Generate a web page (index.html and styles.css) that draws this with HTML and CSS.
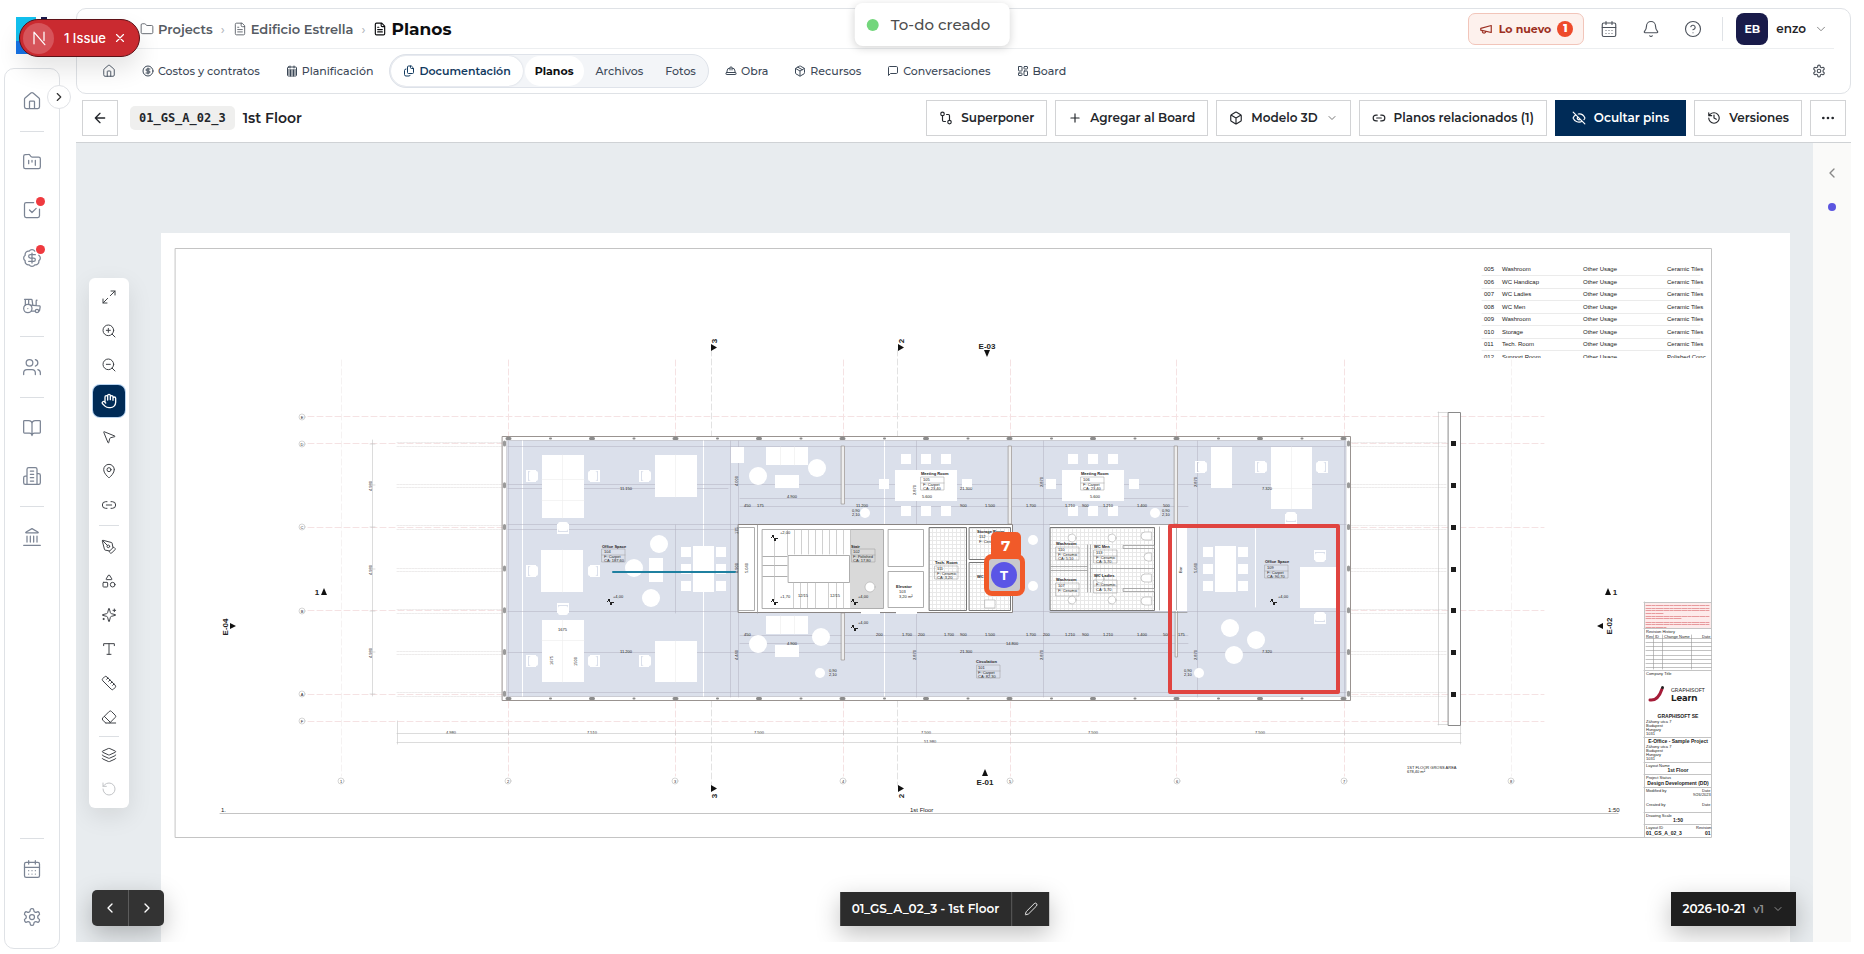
FILE: index.html
```html
<!DOCTYPE html>
<html lang="es">
<head>
<meta charset="utf-8">
<meta name="viewport" content="width=device-width, initial-scale=1">
<title>01_GS_A_02_3 - 1st Floor</title>
<link rel="stylesheet" href="styles.css">
</head>
<body>
<svg class="sprite" aria-hidden="true">
  <symbol id="home" viewBox="0 0 24 24"><path d="M15 21v-8a1 1 0 0 0-1-1h-4a1 1 0 0 0-1 1v8M3 10a2 2 0 0 1 .7-1.5l7-6a2 2 0 0 1 2.6 0l7 6A2 2 0 0 1 21 10v9a2 2 0 0 1-2 2H5a2 2 0 0 1-2-2z"/></symbol>
  <symbol id="kanban" viewBox="0 0 24 24"><path d="M4 20h16a2 2 0 0 0 2-2V8a2 2 0 0 0-2-2h-7.9a2 2 0 0 1-1.7-.9l-.8-1.2A2 2 0 0 0 7.9 3H4a2 2 0 0 0-2 2v13c0 1.1.9 2 2 2zM8 10v4M12 10v2M16 10v6"/></symbol>
  <symbol id="folder" viewBox="0 0 24 24"><path d="M20 20a2 2 0 0 0 2-2V8a2 2 0 0 0-2-2h-7.9a2 2 0 0 1-1.7-.9L9.600 3.900A2 2 0 0 0 7.900 3H4a2 2 0 0 0-2 2v13a2 2 0 0 0 2 2z"/></symbol>
  <symbol id="check" viewBox="0 0 24 24"><path d="M14 3H5a2 2 0 0 0-2 2v14a2 2 0 0 0 2 2h14a2 2 0 0 0 2-2v-8M9 12l3 3 5-5"/></symbol>
  <symbol id="money" viewBox="0 0 24 24"><path d="M3.850 8.620a4 4 0 0 1 4.780-4.770 4 4 0 0 1 6.740 0 4 4 0 0 1 4.780 4.780 4 4 0 0 1 0 6.740 4 4 0 0 1-4.770 4.780 4 4 0 0 1-6.750 0 4 4 0 0 1-4.780-4.770 4 4 0 0 1 0-6.760zM16 8h-6a2 2 0 1 0 0 4h4a2 2 0 1 1 0 4H8M12 18V6"/></symbol>
  <symbol id="tractor" viewBox="0 0 24 24"><path d="m10 11 11 .9a1 1 0 0 1 .8 1.100l-.7 4.200a1 1 0 0 1-1 .8H20M16 18h-5M18 5a1 1 0 0 0-1 1v5.600M3 4h8.100a1 1 0 0 1 1 .9l.9 6.300M4 11V4M7 15h.01M8 10.100V4"/><circle cx="18" cy="18" r="2"/><circle cx="7" cy="15" r="5"/></symbol>
  <symbol id="users" viewBox="0 0 24 24"><path d="M16 21v-2a4 4 0 0 0-4-4H6a4 4 0 0 0-4 4v2M22 21v-2a4 4 0 0 0-3-3.870M16 3.130a4 4 0 0 1 0 7.750"/><circle cx="9" cy="7" r="4"/></symbol>
  <symbol id="book" viewBox="0 0 24 24"><path d="M12 7v14M3 18a1 1 0 0 1-1-1V4a1 1 0 0 1 1-1h5a4 4 0 0 1 4 4 4 4 0 0 1 4-4h5a1 1 0 0 1 1 1v13a1 1 0 0 1-1 1h-6a3 3 0 0 0-3 3 3 3 0 0 0-3-3z"/></symbol>
  <symbol id="building" viewBox="0 0 24 24"><path d="M6 22V4a2 2 0 0 1 2-2h8a2 2 0 0 1 2 2v18zM6 12H4a2 2 0 0 0-2 2v6a2 2 0 0 0 2 2h2M18 9h2a2 2 0 0 1 2 2v9a2 2 0 0 1-2 2h-2M10 6h4M10 10h4M10 14h4M10 18h4"/></symbol>
  <symbol id="bank" viewBox="0 0 24 24"><path d="M2 22h20M6 18v-7M10 18v-7M14 18v-7M18 18v-7M12 2l7 4a.5.5 0 0 1 0 1H5a.5.5 0 0 1 0-1z"/></symbol>
  <symbol id="calendar" viewBox="0 0 24 24"><rect x="3" y="4" width="18" height="18" rx="2"/><path d="M8 2v4M16 2v4M3 10h18M8 14h.01M12 14h.01M16 14h.01M8 18h.01M12 18h.01M16 18h.01"/></symbol>
  <symbol id="gear" viewBox="0 0 24 24"><path d="M12.220 2h-.44a2 2 0 0 0-2 2v.18a2 2 0 0 1-1 1.730l-.43.25a2 2 0 0 1-2 0l-.15-.08a2 2 0 0 0-2.730.73l-.22.38a2 2 0 0 0 .73 2.730l.15.1a2 2 0 0 1 1 1.720v.51a2 2 0 0 1-1 1.740l-.15.09a2 2 0 0 0-.73 2.730l.22.38a2 2 0 0 0 2.730.73l.15-.08a2 2 0 0 1 2 0l.43.25a2 2 0 0 1 1 1.730V20a2 2 0 0 0 2 2h.44a2 2 0 0 0 2-2v-.18a2 2 0 0 1 1-1.730l.43-.25a2 2 0 0 1 2 0l.15.08a2 2 0 0 0 2.730-.73l.22-.39a2 2 0 0 0-.73-2.730l-.15-.08a2 2 0 0 1-1-1.740v-.5a2 2 0 0 1 1-1.740l.15-.09a2 2 0 0 0 .73-2.730l-.22-.38a2 2 0 0 0-2.730-.73l-.15.08a2 2 0 0 1-2 0l-.43-.25a2 2 0 0 1-1-1.730V4a2 2 0 0 0-2-2z"/><circle cx="12" cy="12" r="3"/></symbol>
  <symbol id="right" viewBox="0 0 24 24"><path d="m9 18 6-6-6-6"/></symbol>
  <symbol id="left" viewBox="0 0 24 24"><path d="m15 18-6-6 6-6"/></symbol>
  <symbol id="down" viewBox="0 0 24 24"><path d="m6 9 6 6 6-6"/></symbol>
  <symbol id="file" viewBox="0 0 24 24"><path d="M15 2H6a2 2 0 0 0-2 2v16a2 2 0 0 0 2 2h12a2 2 0 0 0 2-2V7zM14 2v4a2 2 0 0 0 2 2h4M10 9H8M16 13H8M16 17H8"/></symbol>
  <symbol id="files" viewBox="0 0 24 24"><path d="M20 7h-3a2 2 0 0 1-2-2V2M16 2h-5a2 2 0 0 0-2 2v11a2 2 0 0 0 2 2h8a2 2 0 0 0 2-2V7zM6 8a3 3 0 0 0-3 3v8a3 3 0 0 0 3 3h6a3 3 0 0 0 2.500-1.500"/></symbol>
  <symbol id="dollar" viewBox="0 0 24 24"><circle cx="12" cy="12" r="10"/><path d="M16 8h-6a2 2 0 1 0 0 4h4a2 2 0 1 1 0 4H8M12 18V6"/></symbol>
  <symbol id="sheet" viewBox="0 0 24 24"><rect x="3" y="4" width="18" height="18" rx="2"/><path d="M8 2v4M16 2v4M3 10h18M3 14h18M3 18h18M9 10v12M15 10v12"/></symbol>
  <symbol id="helmet" viewBox="0 0 24 24"><path d="M10 10V5a1 1 0 0 1 1-1h2a1 1 0 0 1 1 1v5M14 6a6 6 0 0 1 6 6v3M4 15v-3a6 6 0 0 1 6-6"/><rect x="2" y="15" width="20" height="4" rx="1"/></symbol>
  <symbol id="box" viewBox="0 0 24 24"><path d="M21 8a2 2 0 0 0-1-1.730l-7-4a2 2 0 0 0-2 0l-7 4A2 2 0 0 0 3 8v8a2 2 0 0 0 1 1.730l7 4a2 2 0 0 0 2 0l7-4A2 2 0 0 0 21 16zM3.300 7l8.700 5 8.700-5M12 22V12M7.500 4.300l9 5.100"/></symbol>
  <symbol id="cube" viewBox="0 0 24 24"><path d="M21 8a2 2 0 0 0-1-1.730l-7-4a2 2 0 0 0-2 0l-7 4A2 2 0 0 0 3 8v8a2 2 0 0 0 1 1.730l7 4a2 2 0 0 0 2 0l7-4A2 2 0 0 0 21 16zM3.300 7l8.700 5 8.700-5M12 22V12"/></symbol>
  <symbol id="chat" viewBox="0 0 24 24"><path d="M21 15a2 2 0 0 1-2 2H7l-4 4V5a2 2 0 0 1 2-2h14a2 2 0 0 1 2 2z"/></symbol>
  <symbol id="board" viewBox="0 0 24 24"><rect x="3" y="3" width="7" height="9" rx="1"/><rect x="14" y="3" width="7" height="5" rx="1"/><rect x="14" y="12" width="7" height="9" rx="1"/><rect x="3" y="16" width="7" height="5" rx="1"/></symbol>
  <symbol id="megaphone" viewBox="0 0 24 24"><path d="m3 11 18-5v12L3 14zM11.600 16.800a3 3 0 1 1-5.800-1.600"/></symbol>
  <symbol id="bell" viewBox="0 0 24 24"><path d="M10.270 21a2 2 0 0 0 3.460 0M3.260 15.330A1 1 0 0 0 4 17h16a1 1 0 0 0 .74-1.670C19.410 13.960 18 12.500 18 8A6 6 0 0 0 6 8c0 4.500-1.410 5.960-2.740 7.330"/></symbol>
  <symbol id="help" viewBox="0 0 24 24"><circle cx="12" cy="12" r="10"/><path d="M9.090 9a3 3 0 0 1 5.830 1c0 2-3 3-3 3M12 17h.01"/></symbol>
  <symbol id="back" viewBox="0 0 24 24"><path d="m12 19-7-7 7-7M19 12H5"/></symbol>
  <symbol id="compare" viewBox="0 0 24 24"><circle cx="6" cy="5" r="3"/><path d="M13 6h3a2 2 0 0 1 2 2v8M6 8v8a2 2 0 0 0 2 2h3"/><circle cx="18" cy="19" r="3"/></symbol>
  <symbol id="plus" viewBox="0 0 24 24"><path d="M5 12h14M12 5v14"/></symbol>
  <symbol id="link" viewBox="0 0 24 24"><path d="M9 17H7A5 5 0 0 1 7 7h2M15 7h2a5 5 0 1 1 0 10h-2M8 12h8"/></symbol>
  <symbol id="eyeoff" viewBox="0 0 24 24"><path d="M10.730 5.080A10.740 10.740 0 0 1 21.940 11.650a1 1 0 0 1 0 .7 10.750 10.750 0 0 1-1.450 2.490M14.080 14.160a3 3 0 0 1-4.240-4.240M17.480 17.500A10.750 10.750 0 0 1 2.060 12.350a1 1 0 0 1 0-.7A10.750 10.750 0 0 1 6.510 6.510M2 2l20 20"/></symbol>
  <symbol id="history" viewBox="0 0 24 24"><path d="M3 12a9 9 0 1 0 9-9 9.750 9.750 0 0 0-6.740 2.740L3 8M3 3v5h5M12 7v5l4 2"/></symbol>
  <symbol id="dots" viewBox="0 0 24 24"><g fill="currentColor"><circle cx="5" cy="12" r="1"/><circle cx="12" cy="12" r="1"/><circle cx="19" cy="12" r="1"/></g></symbol>
  <symbol id="expand" viewBox="0 0 24 24"><path d="M15 3h6v6M21 3l-7 7M3 21l7-7M9 21H3v-6"/></symbol>
  <symbol id="zoomin" viewBox="0 0 24 24"><circle cx="11" cy="11" r="8"/><path d="m21 21-4.300-4.300M11 8v6M8 11h6"/></symbol>
  <symbol id="zoomout" viewBox="0 0 24 24"><circle cx="11" cy="11" r="8"/><path d="m21 21-4.300-4.300M8 11h6"/></symbol>
  <symbol id="hand" viewBox="0 0 24 24"><path d="M18 11V6a2 2 0 0 0-4 0M14 10V4a2 2 0 0 0-4 0v2M10 10.500V6a2 2 0 0 0-4 0v8M18 8a2 2 0 1 1 4 0v6a8 8 0 0 1-8 8h-2c-2.800 0-4.500-.86-5.990-2.340l-3.600-3.600a2 2 0 0 1 2.830-2.820L7 15"/></symbol>
  <symbol id="cursor" viewBox="0 0 24 24"><path d="M4.040 4.690a.5.5 0 0 1 .65-.65l16 6.500a.5.5 0 0 1-.06.95l-6.130 1.580a2 2 0 0 0-1.430 1.430l-1.580 6.130a.5.5 0 0 1-.95.060z"/></symbol>
  <symbol id="pin" viewBox="0 0 24 24"><path d="M20 10c0 5-5.540 10.190-7.400 11.800a1 1 0 0 1-1.200 0C9.540 20.190 4 15 4 10a8 8 0 0 1 16 0"/><circle cx="12" cy="10" r="3"/></symbol>
  <symbol id="pen" viewBox="0 0 24 24"><path d="M15.700 21.300a1 1 0 0 1-1.400 0l-1.600-1.600a1 1 0 0 1 0-1.400l5.600-5.600a1 1 0 0 1 1.400 0l1.600 1.600a1 1 0 0 1 0 1.400zM18 13l-1.400-6.900a1 1 0 0 0-.7-.8L3.200 2a1 1 0 0 0-1.200 1.200l3.300 12.700a1 1 0 0 0 .8.7L13 18M2.300 2.300l7.300 7.300"/><circle cx="11" cy="11" r="2"/></symbol>
  <symbol id="shapes" viewBox="0 0 24 24"><path d="M8.300 10a.7.7 0 0 1-.6-1.100L11.400 3a.7.7 0 0 1 1.200 0l3.700 5.900a.7.7 0 0 1-.6 1.100z"/><rect x="3" y="14" width="7" height="7" rx="1"/><circle cx="17.500" cy="17.500" r="3.500"/></symbol>
  <symbol id="spark" viewBox="0 0 24 24"><path d="M9.940 15.500A2 2 0 0 0 8.500 14.060l-6.130-1.580a.5.5 0 0 1 0-.96L8.500 9.940A2 2 0 0 0 9.940 8.500l1.580-6.130a.5.5 0 0 1 .96 0l1.580 6.130a2 2 0 0 0 1.440 1.440l6.130 1.580a.5.5 0 0 1 0 .96l-6.130 1.580a2 2 0 0 0-1.440 1.440l-1.580 6.130a.5.5 0 0 1-.96 0zM20 3v4M22 5h-4M4 17v2M5 18H3"/></symbol>
  <symbol id="text" viewBox="0 0 24 24"><path d="M4 7V4h16v3M9 20h6M12 4v16"/></symbol>
  <symbol id="ruler" viewBox="0 0 24 24"><path d="M21.300 15.300a2.400 2.400 0 0 1 0 3.400l-2.600 2.600a2.400 2.400 0 0 1-3.400 0L2.700 8.700a2.400 2.400 0 0 1 0-3.400l2.600-2.600a2.400 2.400 0 0 1 3.400 0zM14.500 12.500l2-2M11.500 9.500l2-2M8.500 6.500l2-2M17.500 15.500l2-2"/></symbol>
  <symbol id="eraser" viewBox="0 0 24 24"><path d="m7 21-4.300-4.300a2.400 2.400 0 0 1 0-3.400l9.600-9.600a2.400 2.400 0 0 1 3.400 0l5.600 5.600a2.400 2.400 0 0 1 0 3.400L13 21M22 21H7M5 11l9 9"/></symbol>
  <symbol id="layers" viewBox="0 0 24 24"><path d="M12.830 2.180a2 2 0 0 0-1.660 0L2.600 6.080a1 1 0 0 0 0 1.830l8.580 3.910a2 2 0 0 0 1.660 0l8.580-3.900a1 1 0 0 0 0-1.830zM2 12a1 1 0 0 0 .58.910l8.600 3.910a2 2 0 0 0 1.650 0l8.580-3.900A1 1 0 0 0 22 12M2 17a1 1 0 0 0 .58.910l8.600 3.910a2 2 0 0 0 1.650 0l8.580-3.900A1 1 0 0 0 22 17"/></symbol>
  <symbol id="undo" viewBox="0 0 24 24"><path d="M3 12a9 9 0 1 0 9-9 9.750 9.750 0 0 0-6.740 2.740L3 8M3 3v5h5"/></symbol>
  <symbol id="pencil" viewBox="0 0 24 24"><path d="M21.170 6.810a1 1 0 0 0-3.980-3.980L3.840 16.170a2 2 0 0 0-.5.830l-1.320 4.350a.5.5 0 0 0 .62.620l4.350-1.320a2 2 0 0 0 .83-.5z"/></symbol>
  <symbol id="close" viewBox="0 0 24 24"><path d="M18 6 6 18M6 6l12 12"/></symbol>
</svg>

<div class="app">
  <div class="rail">
    <a class="logo" href="#" aria-label="Inicio"><svg viewBox="0 0 40 37"><path fill="#12c0ee" d="M0 0h20v24H0z"/><path fill="#1673e6" d="M0 24h20v13H0z"/><path fill="#1b1b4b" d="M25 0h6v6h-6z"/></svg></a>
    <nav class="side" aria-label="Principal">
      <a class="side-item" href="#" aria-label="Inicio"><svg class="i20"><use href="#home"/></svg></a>
      <hr>
      <a class="side-item" href="#" aria-label="Proyectos"><svg class="i20"><use href="#kanban"/></svg></a>
      <a class="side-item" href="#" aria-label="Tareas"><svg class="i20"><use href="#check"/></svg><i class="alert"></i></a>
      <a class="side-item" href="#" aria-label="Costos"><svg class="i20"><use href="#money"/></svg><i class="alert"></i></a>
      <a class="side-item" href="#" aria-label="Equipos"><svg class="i20"><use href="#tractor"/></svg></a>
      <hr>
      <a class="side-item" href="#" aria-label="Personas"><svg class="i20"><use href="#users"/></svg></a>
      <hr>
      <a class="side-item" href="#" aria-label="Biblioteca"><svg class="i20"><use href="#book"/></svg></a>
      <a class="side-item" href="#" aria-label="Empresa"><svg class="i20"><use href="#building"/></svg></a>
      <hr>
      <a class="side-item" href="#" aria-label="Finanzas"><svg class="i20"><use href="#bank"/></svg></a>
      <hr class="push">
      <a class="side-item" href="#" aria-label="Calendario"><svg class="i20"><use href="#calendar"/></svg></a>
      <a class="side-item" href="#" aria-label="Ajustes"><svg class="i20"><use href="#gear"/></svg></a>
      <button class="toggle" aria-label="Expandir menú"><svg class="i14"><use href="#right"/></svg></button>
    </nav>
  </div>

  <div class="main">
    <header class="head">
      <div class="head-top">
        <nav class="crumbs" aria-label="Ruta">
          <a href="#"><svg class="i14"><use href="#folder"/></svg>Projects</a>
          <span class="sep">›</span>
          <a href="#"><svg class="i14"><use href="#file"/></svg>Edificio Estrella</a>
          <span class="sep">›</span>
          <h1><svg class="i14"><use href="#file"/></svg>Planos</h1>
        </nav>
        <div class="account">
          <button class="news"><svg class="i14"><use href="#megaphone"/></svg>Lo nuevo<b>1</b></button>
          <button class="tool" aria-label="Calendario"><svg class="i18"><use href="#calendar"/></svg></button>
          <button class="tool" aria-label="Notificaciones"><svg class="i18"><use href="#bell"/></svg></button>
          <button class="tool" aria-label="Ayuda"><svg class="i18"><use href="#help"/></svg></button>
          <button class="user"><span class="avatar">EB</span>enzo<svg class="i14"><use href="#down"/></svg></button>
        </div>
      </div>
      <nav class="tabs" aria-label="Proyecto">
        <a class="tab" href="#" aria-label="Inicio"><svg class="i14"><use href="#home"/></svg></a>
        <a class="tab" href="#"><svg class="i12"><use href="#dollar"/></svg>Costos y contratos</a>
        <a class="tab" href="#"><svg class="i12"><use href="#sheet"/></svg>Planificación</a>
        <div class="group">
          <a class="tab on" href="#"><svg class="i12"><use href="#files"/></svg>Documentación</a>
          <a class="tab sub cur" href="#">Planos</a>
          <a class="tab sub" href="#">Archivos</a>
          <a class="tab sub" href="#">Fotos</a>
        </div>
        <a class="tab" href="#"><svg class="i12"><use href="#helmet"/></svg>Obra</a>
        <a class="tab" href="#"><svg class="i12"><use href="#box"/></svg>Recursos</a>
        <a class="tab" href="#"><svg class="i12"><use href="#chat"/></svg>Conversaciones</a>
        <a class="tab" href="#"><svg class="i12"><use href="#board"/></svg>Board</a>
        <button class="tool config" aria-label="Configuración"><svg class="i14"><use href="#gear"/></svg></button>
      </nav>
    </header>

    <div class="bar">
      <button class="btn square" aria-label="Volver"><svg class="i16"><use href="#back"/></svg></button>
      <code class="code">01_GS_A_02_3</code>
      <h2>1st Floor</h2>
      <div class="actions">
        <button class="btn"><svg class="i14"><use href="#compare"/></svg>Superponer</button>
        <button class="btn"><svg class="i14"><use href="#plus"/></svg>Agregar al Board</button>
        <button class="btn"><svg class="i14"><use href="#cube"/></svg>Modelo 3D<svg class="i12 dim"><use href="#down"/></svg></button>
        <button class="btn"><svg class="i14"><use href="#link"/></svg>Planos relacionados (1)</button>
        <button class="btn primary"><svg class="i14"><use href="#eyeoff"/></svg>Ocultar pins</button>
        <button class="btn"><svg class="i14"><use href="#history"/></svg>Versiones</button>
        <button class="btn square" aria-label="Más"><svg class="i16"><use href="#dots"/></svg></button>
      </div>
    </div>

    <div class="work">
      <div class="canvas">
        <div class="sheet">
          <svg class="plan" viewBox="161 233 1629 709" role="img" aria-label="Plano 1st Floor">
            <defs>
              <clipPath id="clip"><path d="M1480 262h230v96h-230z"/></clipPath>
              <pattern id="tile" width="4" height="4" patternUnits="userSpaceOnUse"><path d="M0 0h4v4H0z" fill="#fff"/><path d="M0 .5h4M.5 0v4" stroke="#e8e8e8"/></pattern>
              <g id="chair"><rect x="-4" y="-5" width="9" height="10" rx="2"/><path d="M-7-6h2V6h-2zM-6-6h9v1h-9zM-6 5h9v1h-9z"/></g>
              <g id="seat"><path d="M0 0h10v10H0z"/></g>
              <g id="six"><path d="M0 0h21v46H0z"/><use href="#seat" x="-12" y="1"/><use href="#seat" x="-12" y="18"/><use href="#seat" x="-12" y="35"/><use href="#seat" x="23" y="1"/><use href="#seat" x="23" y="18"/><use href="#seat" x="23" y="35"/></g>
              <g id="meeting"><path d="M0 0h62v31H0z"/><use href="#seat" x="6" y="-16"/><use href="#seat" x="26" y="-16"/><use href="#seat" x="46" y="-16"/><use href="#seat" x="6" y="36"/><use href="#seat" x="26" y="36"/><use href="#seat" x="46" y="36"/><use href="#seat" x="-16" y="9"/><use href="#seat" x="67" y="9"/></g>
              <g id="level"><path fill="#222" d="M0 0v-3h-2v3zM0 0v3h2v-3zM-3-1h2v1h-2zM2 0h2v1H2z"/></g>
              <g id="tag"><path d="M0 0h23v13H0zM0 6h23" fill="none" stroke="#999" stroke-width=".5"/></g>
            </defs>

            <path class="frame" d="M175.500 248.500h1536v589h-1536zM220 813.500h1398"/>

            <g class="grid">
              <path class="faint" d="M341.500 360v416M1511.500 360v416"/>
              <path d="M508.500 360v416M675.500 360v416M843.500 360v416M1010.500 360v416M1176.500 360v416M1344.500 360v416"/>
              <path d="M308 416.500h1236M308 443.500h1236M308 527.500h1236M308 610.500h1236M308 694.500h1236M308 721.500h1236"/>
              <path class="gray" d="M711.500 350v436M897.500 350v436"/>
            </g>
            <g class="beams"><path d="M397 442.500h1050M397 446.500h1050M397 484.500h1050M397 487.500h1050M397 525.500h1050M397 529.500h1050M397 568.500h1050M397 571.500h1050M397 609.500h1050M397 613.500h1050M397 651.500h1050M397 654.500h1050M397 692.500h1050M397 696.500h1050"/></g>

            <path fill="#fff" stroke="#999390" d="M502.500 436.500h848v264h-848z"/>
            <path fill="#dbe0eb" stroke="#b4b4bc" stroke-width=".6" d="M507 440.500h839v256H507z"/>
            <path fill="none" stroke="#8c8c8c" stroke-width="3" stroke-dasharray="3 80.500" d="M507 438.500h842M507 698.500h842"/>
            <path fill="none" stroke="#8c8c8c" stroke-width="2" stroke-dasharray="1 82.500" d="M550 438.500h800M550 698.500h800"/>
            <path fill="none" stroke="#9a9a9a" stroke-width="3" stroke-dasharray="3 38.700" d="M504.500 442v254M1348.500 442v254"/>
            <path stroke="#fff" d="M522.500 441v255M703.500 441v255M884.500 441v255M1255.500 529v78"/>
            <g class="hair"><path d="M508 446.500h838M508 484.500h838M508 488.500h220M508 524.500h838M508 529.500h230M508 611.500h838M508 652.500h838M508 692.500h838M740 498.500h434M740 506.500h448M740 643.500h448M740 635.500h448M675.500 525v88M730.500 441v256M738.500 441v256M916.500 441v256M1043.500 441v256M1197.500 441v256M508.500 441v256M1344.500 441v256"/></g>

            <g fill="#fff">
              <path d="M542 455h42v63h-42zM655 455h42v42h-42zM541 550h42v42h-42zM542 620h42v62h-42zM655 641h42v41h-42z"/>
              <path d="M766 447h42v18h-42zM775 475h24v13h-24zM731 447h13v16h-13zM649 558h14v24h-14zM766 616h42v18h-42zM775 645h24v12h-24z"/>
              <path d="M1211 447h21v41h-21zM1271 447h41v62h-41zM1300 567h36v41h-36z"/>
              <use href="#chair" x="533" y="476"/><use href="#chair" transform="translate(593 476) rotate(180)"/><use href="#chair" x="646" y="476"/><use href="#chair" transform="translate(563 527) rotate(-90)"/>
              <use href="#chair" x="533" y="571"/><use href="#chair" transform="translate(593 571) rotate(180)"/><use href="#chair" transform="translate(563 610) rotate(90)"/>
              <use href="#chair" x="533" y="661"/><use href="#chair" transform="translate(593 661) rotate(180)"/><use href="#chair" x="646" y="661"/>
              <use href="#chair" x="1202" y="467"/><use href="#chair" x="1262" y="467"/><use href="#chair" transform="translate(1321 467) rotate(180)"/><use href="#chair" transform="translate(1291 517) rotate(-90)"/>
              <use href="#chair" transform="translate(1320 557) rotate(90)"/><use href="#chair" transform="translate(1320 617) rotate(-90)"/>
              <circle cx="659" cy="544" r="9"/><circle cx="634" cy="568" r="9"/><circle cx="651" cy="598" r="9"/><circle cx="758" cy="476" r="9"/><circle cx="817" cy="468" r="9"/><circle cx="821" cy="637" r="9"/><circle cx="758" cy="644" r="9"/>
              <circle cx="1230" cy="628" r="9"/><circle cx="1256" cy="640" r="9"/><circle cx="1234" cy="655" r="9"/>
              <use href="#six" x="693" y="546"/><use href="#six" x="1215" y="546"/>
              <use href="#meeting" x="895" y="470"/><use href="#meeting" x="1062" y="470"/>
              <circle cx="865" cy="513" r="5"/><circle cx="820" cy="673" r="5"/><circle cx="1155" cy="513" r="5"/><circle cx="1199" cy="673" r="5"/><circle cx="1033" cy="540" r="5"/><circle cx="1033" cy="586" r="5"/>
            </g>
            <path fill="none" stroke="#ececec" stroke-width=".6" d="M562.500 455v63M542 479.500h42M542 500.500h42M675.500 455v42M562.500 550v42M562.500 620v62M542 640.500h42M675.500 641v41M780.500 447v18M794.500 447v18M780.500 616v18M794.500 616v18M1291.500 447v62M1271 488.500h41"/>

            <g class="wall"><path d="M841.500 446h3v58h-3zM841.500 613h3v47h-3zM1008.500 446h3v78h-3zM1174.500 446h3v78h-3zM1175.500 607h2v50h-2z"/></g>

            <path fill="#fff" stroke="#8a8583" d="M738.500 524.500h274v88h-274z"/>
            <path fill="url(#tile)" stroke="#777" d="M929.500 527.500h37v83h-37zM969.500 527.500h41v32h-41zM969.500 562.500h41v48h-41z"/>
            <path fill="#d9d9d9" d="M850 529h33v79h-33z"/>
            <g class="core"><path d="M738.500 527.500h16v83h-16zM757.500 525v88M762.500 529.500h121v79h-121zM788.500 555.500h61v27h-61zM888.500 529.500h35v37h-35zM888.500 571.500h35v36h-35zM763 556.500h24M763 565.500h24M763 576.500h24"/></g>
            <path fill="none" stroke="#bbb" stroke-width=".7" d="M787.500 530v25M794.500 530v24M801.500 530v24M808.500 530v24M815.500 530v24M822.500 530v24M829.500 530v24M836.500 530v24M843.500 530v24M850.500 530v24M793.500 583v25M800.500 583v25M807.500 583v25M815.500 583v25M828.500 583v25M836.500 583v25M843.500 583v25M774.500 540v60"/>
            <path fill="#fff" d="M861 609h19v5h-19zM896 609h21v5h-21z"/>

            <path fill="#fff" d="M1050 525h137v86h-137z"/>
            <path fill="url(#tile)" stroke="#777" d="M1050.500 527.500h104v83h-104z"/>
            <g class="core"><path d="M1050 524.500h137M1050 612.500h137M1087.500 545v47M1090.500 545v47M1051 566.500h36M1051 570.500h36M1091 568.500h63M1123.500 545.500h31v3h-31zM1123.500 588.500h31v3h-31zM1159.500 527v83M1176.500 527v83"/></g>
            <g fill="#fff" stroke="#aaa" stroke-width=".6"><path d="M1151 532h-6a4 4 0 0 0 0 8h6zM1151 553h-3a4 4 0 0 0 0 8h3zM1151 574h-6a4 4 0 0 0 0 8h6zM1151 597h-6a4 4 0 0 0 0 8h6zM985 600h10v8h-10z"/><circle cx="1072" cy="538" r="4"/><circle cx="1112" cy="538" r="4"/><circle cx="1100" cy="579" r="4"/><circle cx="1072" cy="600" r="4"/><circle cx="1112" cy="600" r="4"/><circle cx="870" cy="587" r="5"/></g>

            <g class="tiny">
              <text x="602" y="548" class="b">Office Space</text><text x="604" y="553">104</text><text x="604" y="558">F: Carpet</text><text x="604" y="562">CA: 187,60</text>
              <text x="921" y="475" class="b">Meeting Room</text><text x="923" y="481">105</text><text x="923" y="486">F: Carpet</text><text x="923" y="490">CA: 23,40</text>
              <text x="1081" y="475" class="b">Meeting Room</text><text x="1083" y="481">106</text><text x="1083" y="486">F: Carpet</text><text x="1083" y="490">CA: 23,40</text>
              <text x="851" y="548" class="b">Stair</text><text x="853" y="553">102</text><text x="853" y="558">F: Polished</text><text x="853" y="562">CA: 17,80</text>
              <text x="896" y="588" class="b">Elevator</text><text x="899" y="593">103</text><text x="899" y="598">3,20 m²</text>
              <text x="935" y="564" class="b">Tech. Room</text><text x="937" y="570">111</text><text x="937" y="575">F: Ceramic</text><text x="937" y="579">CA: 3,20</text>
              <text x="977" y="533" class="b">Storage Room</text><text x="979" y="538">112</text><text x="979" y="543">F: Ceramic</text><text x="977" y="578" class="b">WC</text>
              <text x="1056" y="545" class="b">Washroom</text><text x="1058" y="551">110</text><text x="1058" y="556">F: Ceramic</text><text x="1058" y="560">CA: 5,10</text>
              <text x="1056" y="581" class="b">Washroom</text><text x="1058" y="587">107</text><text x="1058" y="592">F: Ceramic</text>
              <text x="1094" y="548" class="b">WC Men</text><text x="1096" y="554">113</text><text x="1096" y="559">F: Ceramic</text><text x="1096" y="563">CA: 5,70</text>
              <text x="1094" y="577" class="b">WC Ladies</text><text x="1096" y="586">F: Ceramic</text><text x="1096" y="591">CA: 5,70</text>
              <text x="976" y="663" class="b">Circulation</text><text x="978" y="669">101</text><text x="978" y="674">F: Carpet</text><text x="978" y="678">CA: 82,30</text>
              <text x="1265" y="563" class="b">Office Space</text><text x="1267" y="569">109</text><text x="1267" y="574">F: Carpet</text><text x="1267" y="578">CA: 90,70</text>
              <text x="620" y="490">11.150</text><text x="620" y="653">11.200</text><text x="787" y="498">4.900</text><text x="787" y="645">4.900</text><text x="922" y="498">5.600</text><text x="1090" y="498">5.600</text><text x="1262" y="490">7.320</text><text x="1262" y="653">7.320</text><text x="960" y="490">21.300</text><text x="960" y="653">21.300</text><text x="1006" y="645">14.800</text>
              <text x="744" y="507">450</text><text x="757" y="507">175</text><text x="856" y="507">11.200</text><text x="960" y="507">900</text><text x="985" y="507">1.500</text><text x="1026" y="507">1.700</text><text x="1065" y="507">1.210</text><text x="1082" y="507">900</text><text x="1103" y="507">1.210</text><text x="1137" y="507">1.400</text><text x="1163" y="507">500</text>
              <text x="744" y="636">450</text><text x="876" y="636">200</text><text x="902" y="636">1.700</text><text x="918" y="636">200</text><text x="944" y="636">1.700</text><text x="960" y="636">900</text><text x="985" y="636">1.500</text><text x="1026" y="636">1.700</text><text x="1043" y="636">200</text><text x="1065" y="636">1.210</text><text x="1082" y="636">900</text><text x="1103" y="636">1.210</text><text x="1137" y="636">1.400</text><text x="1163" y="636">500</text><text x="1178" y="636">175</text>
              <text x="852" y="512">0,90</text><text x="852" y="516">2,10</text><text x="829" y="672">0,90</text><text x="829" y="676">2,10</text><text x="1162" y="512">0,90</text><text x="1162" y="516">2,10</text><text x="1184" y="672">0,90</text><text x="1184" y="676">2,10</text>
              <text x="446" y="734">4.980</text><text x="587" y="734">7.510</text><text x="754" y="734">7.500</text><text x="921" y="734">7.500</text><text x="1088" y="734">7.500</text><text x="1255" y="734">7.500</text><text x="924" y="743">51.980</text>
              <text x="558" y="631">1675</text><text transform="translate(553 665) rotate(-90)">1675</text><text transform="translate(577 666) rotate(-90)">1500</text>
              <text transform="translate(738 486) rotate(-90)">4.000</text><text transform="translate(738 534) rotate(-90)">175</text><text transform="translate(738 573) rotate(-90)">4.900</text><text transform="translate(738 660) rotate(-90)">4.440</text><text transform="translate(748 573) rotate(-90)">5.040</text><text transform="translate(916 495) rotate(-90)">2.870</text><text transform="translate(916 660) rotate(-90)">2.870</text><text transform="translate(1043 487) rotate(-90)">2.870</text><text transform="translate(1043 660) rotate(-90)">2.870</text><text transform="translate(1197 487) rotate(-90)">2.870</text><text transform="translate(1197 573) rotate(-90)">5.040</text><text transform="translate(1197 660) rotate(-90)">2.870</text><text transform="translate(1182 573) rotate(-90)">Bar</text><text transform="translate(372 491) rotate(-90)">4.980</text><text transform="translate(372 575) rotate(-90)">4.980</text><text transform="translate(372 658) rotate(-90)">4.980</text>
              <text x="1407" y="769">1ST FLOOR GROSS AREA</text><text x="1407" y="773">678,40 m²</text>
              <text x="613" y="598">+4,00</text><text x="780" y="534">+2,00</text><text x="780" y="598">+1,70</text><text x="858" y="598">+4,00</text><text x="858" y="624">+4,00</text><text x="1278" y="598">+4,00</text><text x="798" y="597">12/15</text><text x="830" y="597">12/15</text>
            </g>
            <use href="#tag" x="602" y="549"/><use href="#tag" x="921" y="477"/><use href="#tag" x="1081" y="477"/><use href="#tag" x="852" y="549"/><use href="#tag" x="1056" y="547"/><use href="#tag" x="1094" y="550"/><use href="#tag" x="1056" y="583"/><use href="#tag" x="1094" y="580"/><use href="#tag" x="977" y="665"/><use href="#tag" x="1265" y="565"/><use href="#tag" x="935" y="566"/>
            <use href="#level" x="610" y="602"/><use href="#level" x="774" y="538"/><use href="#level" x="774" y="602"/><use href="#level" x="854" y="602"/><use href="#level" x="854" y="628"/><use href="#level" x="1273" y="602"/>

            <path fill="none" stroke="#c4c4c4" stroke-width=".6" d="M372.500 440v256M370 444h5M370 485h5M370 527h5M370 569h5M370 611h5M370 652h5M370 694h5M397.500 721v23M397 733.500h1064M397 742.500h1064M1460.500 725v19M508.500 731v4M675.500 731v4M843.500 731v4M1010.500 731v4M1176.500 731v4M1344.500 731v4M1438.500 412v313M1438 412.500h10M1438 724.500h10"/>
            <path fill="#fff" stroke="#8a8a8a" d="M1448.500 412.500h12v313h-12z"/>
            <path fill="#1d1d1d" d="M1451 441h5v5h-5zM1451 483h5v5h-5zM1451 525h5v5h-5zM1451 567h5v5h-5zM1451 608h5v5h-5zM1451 650h5v5h-5zM1451 692h5v5h-5z"/>

            <g class="bubble">
              <circle cx="341" cy="781" r="3"/><circle cx="508" cy="781" r="3"/><circle cx="675" cy="781" r="3"/><circle cx="843" cy="781" r="3"/><circle cx="1010" cy="781" r="3"/><circle cx="1177" cy="781" r="3"/><circle cx="1344" cy="781" r="3"/><circle cx="1511" cy="781" r="3"/>
              <circle cx="302" cy="417" r="3"/><circle cx="302" cy="444" r="3"/><circle cx="302" cy="527" r="3"/><circle cx="302" cy="611" r="3"/><circle cx="302" cy="694" r="3"/><circle cx="302" cy="721" r="3"/>
            </g>
            <g class="tiny mid">
              <text x="341" y="783">1</text><text x="508" y="783">2</text><text x="675" y="783">3</text><text x="843" y="783">4</text><text x="1010" y="783">5</text><text x="1177" y="783">6</text><text x="1344" y="783">7</text><text x="1511" y="783">8</text>
              <text x="302" y="419">E</text><text x="302" y="446">D</text><text x="302" y="529">C</text><text x="302" y="613">B</text><text x="302" y="696">A</text><text x="302" y="723">F</text>
            </g>

            <g class="mark">
              <text x="987" y="349">E-03</text><path d="M984 350h6l-3 7z"/>
              <text x="985" y="785">E-01</text><path d="M982 776h6l-3-7z"/>
              <text transform="translate(717 341) rotate(-90)">3</text><path d="M711 344v7l6-3.500z"/>
              <text transform="translate(904 341) rotate(-90)">2</text><path d="M898 344v7l6-3.500z"/>
              <text transform="translate(717 796) rotate(-90)">3</text><path d="M711 785v7l6-3.500z"/>
              <text transform="translate(904 796) rotate(-90)">2</text><path d="M898 785v7l6-3.500z"/>
              <text x="317" y="595">1</text><path d="M321 595h6l-3-7z"/>
              <text x="1615" y="595">1</text><path d="M1605 595h6l-3-7z"/>
              <text transform="translate(228 627) rotate(-90)">E-04</text><path d="M230 623v6l6-3z"/>
              <text transform="translate(1612 626) rotate(-90)">E-02</text><path d="M1603 623v6l-6-3z"/>
            </g>
            <g class="cap"><text x="221" y="812">1.</text><text x="910" y="812">1st Floor</text><text x="1608" y="812">1:50</text></g>

            <g clip-path="url(#clip)">
              <path stroke="#ddd" stroke-width=".6" d="M1482 275.500h218M1482 288.500h218M1482 300.500h218M1482 313.500h218M1482 325.500h218M1482 338.500h218M1482 350.500h218"/>
              <g class="cap">
                <text x="1484" y="271">005</text><text x="1502" y="271">Washroom</text><text x="1583" y="271">Other Usage</text><text x="1667" y="271">Ceramic Tiles</text>
                <text x="1484" y="284">006</text><text x="1502" y="284">WC Handicap</text><text x="1583" y="284">Other Usage</text><text x="1667" y="284">Ceramic Tiles</text>
                <text x="1484" y="296">007</text><text x="1502" y="296">WC Ladies</text><text x="1583" y="296">Other Usage</text><text x="1667" y="296">Ceramic Tiles</text>
                <text x="1484" y="309">008</text><text x="1502" y="309">WC Men</text><text x="1583" y="309">Other Usage</text><text x="1667" y="309">Ceramic Tiles</text>
                <text x="1484" y="321">009</text><text x="1502" y="321">Washroom</text><text x="1583" y="321">Other Usage</text><text x="1667" y="321">Ceramic Tiles</text>
                <text x="1484" y="334">010</text><text x="1502" y="334">Storage</text><text x="1583" y="334">Other Usage</text><text x="1667" y="334">Ceramic Tiles</text>
                <text x="1484" y="346">011</text><text x="1502" y="346">Tech. Room</text><text x="1583" y="346">Other Usage</text><text x="1667" y="346">Ceramic Tiles</text>
                <text x="1484" y="359">012</text><text x="1502" y="359">Support Room</text><text x="1583" y="359">Other Usage</text><text x="1667" y="359">Polished Conc</text>
              </g>
            </g>

            <path class="frame" d="M1644.500 602v235M1644 602.500h67M1644 628.500h67M1644 670.500h67M1644 737.500h67M1644 762.500h67M1644 774.500h67M1644 787.500h67M1644 812.500h67M1644 824.500h67"/>
            <path fill="none" stroke="#999" stroke-width=".6" d="M1646 638.500h65M1646 642.500h65M1646 646.500h65M1646 650.500h65M1646 655.500h65M1646 659.500h65M1646 663.500h65M1646 667.500h65M1653.500 635v34M1662.500 635v34M1691.500 635v34"/>
            <path fill="#fdeaea" d="M1645 603h66v25h-66z"/>
            <path stroke="#e79a9d" stroke-dasharray="5 1 3 1 7 1" d="M1646 605.500h64M1646 608.500h64M1646 610.500h64M1646 613.500h18M1646 616.500h64M1646 618.500h36M1646 622.500h64M1646 624.500h64M1646 627.500h20"/>
            <path fill="none" stroke="#a51c38" stroke-width="3" d="M1650 700c7 1 10-5 12-11"/><circle cx="1662.500" cy="687.500" r="1.500" fill="#222"/>
            <g class="brand"><text x="1671" y="692" font-size="5">GRAPHISOFT</text><text x="1671" y="701" font-size="9" font-weight="700">Learn</text></g>
            <g class="head5 mid"><text x="1678" y="718">GRAPHISOFT SE</text><text x="1678" y="743">E-Office - Sample Project</text><text x="1678" y="772">1st Floor</text><text x="1678" y="785">Design Development (DD)</text><text x="1678" y="822">1:50</text></g>
            <g class="head5"><text x="1646" y="835">01_GS_A_02_3</text><text x="1705" y="835">01</text></g>
            <g class="tiny"><text x="1646" y="633">Revision History</text><text x="1646" y="638">Rev</text><text x="1655" y="638">ID</text><text x="1664" y="638">Change Name</text><text x="1702" y="638">Date</text><text x="1646" y="675">Company Title</text><text x="1646" y="723">Záhony utca 7</text><text x="1646" y="727">Budapest</text><text x="1646" y="731">Hungary</text><text x="1646" y="735">1031</text><text x="1646" y="748">Záhony utca 7</text><text x="1646" y="752">Budapest</text><text x="1646" y="756">Hungary</text><text x="1646" y="760">1031</text><text x="1646" y="767">Layout Name</text><text x="1646" y="779">Project Status</text><text x="1646" y="792">Modified by</text><text x="1702" y="792">Date</text><text x="1693" y="796">9/26/2023</text><text x="1646" y="806">Created by</text><text x="1702" y="806">Date</text><text x="1646" y="817">Drawing Scale</text><text x="1646" y="829">Layout ID</text><text x="1696" y="829">Revision</text></g>

            <path stroke="#1f80a0" stroke-width="2" d="M613 572h122"/>
            <rect x="1170" y="526" width="168" height="166" fill="none" stroke="#e04440" stroke-width="4" stroke-linejoin="round"/>
          </svg>
          <button class="marker" aria-label="To-do 7"><b>7</b><span>T</span></button>
        </div>

        <div class="tools" role="toolbar" aria-label="Herramientas">
          <button aria-label="Ajustar"><svg class="i16"><use href="#expand"/></svg></button>
          <button aria-label="Acercar"><svg class="i16"><use href="#zoomin"/></svg></button>
          <button aria-label="Alejar"><svg class="i16"><use href="#zoomout"/></svg></button>
          <button class="active" aria-label="Mover"><svg class="i16"><use href="#hand"/></svg></button>
          <button aria-label="Seleccionar"><svg class="i16"><use href="#cursor"/></svg></button>
          <button aria-label="Pin"><svg class="i16"><use href="#pin"/></svg></button>
          <button aria-label="Enlace"><svg class="i16"><use href="#link"/></svg></button>
          <hr>
          <button aria-label="Dibujar"><svg class="i16"><use href="#pen"/></svg></button>
          <button aria-label="Formas"><svg class="i16"><use href="#shapes"/></svg></button>
          <button aria-label="IA"><svg class="i16"><use href="#spark"/></svg></button>
          <button aria-label="Texto"><svg class="i16"><use href="#text"/></svg></button>
          <button aria-label="Medir"><svg class="i16"><use href="#ruler"/></svg></button>
          <button aria-label="Borrar"><svg class="i16"><use href="#eraser"/></svg></button>
          <hr class="tight">
          <button aria-label="Capas"><svg class="i16"><use href="#layers"/></svg></button>
          <button aria-label="Deshacer" disabled><svg class="i16"><use href="#undo"/></svg></button>
        </div>

        <div class="pager"><button aria-label="Anterior"><svg class="i16"><use href="#left"/></svg></button><button aria-label="Siguiente"><svg class="i16"><use href="#right"/></svg></button></div>
        <div class="caption"><span>01_GS_A_02_3 - 1st Floor</span><button aria-label="Editar"><svg class="i14"><use href="#pencil"/></svg></button></div>
        <button class="version">2026-10-21<small>v1</small><svg class="i12"><use href="#down"/></svg></button>
      </div>
      <aside class="panel"><button class="tool" aria-label="Abrir panel"><svg class="i16"><use href="#left"/></svg></button><i class="dot"></i></aside>
    </div>
  </div>
</div>

<div class="issue"><span class="n"><svg viewBox="0 0 24 24" class="i20"><path d="M6 19V5l13 15M18 5v10"/></svg></span>1 Issue<button aria-label="Cerrar"><svg class="i14"><use href="#close"/></svg></button></div>
<div class="toast" role="status"><i></i>To-do creado</div>
</body>
</html>
```

FILE: styles.css
```css
* { box-sizing: border-box; }
body { margin: 0; background: #fff; color: #1f2328; font: 500 12px/16px Montserrat, Inter, "Open Sans", sans-serif; }
button { font: inherit; color: inherit; background: none; border: 0; padding: 0; margin: 0; cursor: pointer; display: flex; align-items: center; justify-content: center; }
a { color: inherit; text-decoration: none; }
h1, h2 { margin: 0; }
hr { border: 0; margin: 0; height: 1px; background: #dcdfe3; }
svg { display: block; flex: none; fill: none; stroke-linecap: round; stroke-linejoin: round; }
.sprite { position: absolute; width: 0; height: 0; }
.i12, .i14, .i16, .i18, .i20 { stroke: currentColor; stroke-width: 2; }
.i12 { width: 12px; height: 12px; }
.i14 { width: 14px; height: 14px; }
.i16 { width: 16px; height: 16px; }
.i18 { width: 18px; height: 18px; stroke-width: 1.5; }
.i20 { width: 20px; height: 20px; stroke-width: 1.5; }

.app { display: flex; gap: 16px; height: 100vh; min-height: 860px; padding: 8px 13px 5px 4px; }
.rail { width: 56px; flex: none; display: flex; flex-direction: column; }
.logo { height: 60px; padding: 9px 0 0 12px; }
.logo svg { width: 40px; height: 37px; }
.side { flex: 1; position: relative; border: 1px solid #dfe2e6; border-radius: 10px; display: flex; flex-direction: column; align-items: center; gap: 12px; padding: 14px 0 13px; color: #7b8494; }
.side hr { width: 24px; }
.side .push { margin-top: auto; }
.side-item { position: relative; width: 36px; height: 36px; display: grid; place-items: center; }
.alert { position: absolute; right: 5px; top: 5px; width: 9px; height: 9px; border-radius: 50%; background: #ef3a3f; box-shadow: 0 0 0 1px #fff; }
.toggle { position: absolute; right: -12px; top: 16px; width: 24px; height: 24px; border-radius: 50%; background: #fff; border: 1px solid #e1e3e7; color: #333; }

.main { flex: 1; min-width: 0; display: flex; flex-direction: column; padding-bottom: 7px; }
.head { border: 1px solid #dfe2e6; border-radius: 10px; }
.head-top { display: flex; justify-content: space-between; align-items: center; height: 40px; margin: 0 16px; border-bottom: 1px solid #eceef0; }
.crumbs { display: flex; align-items: center; padding-left: 47px; font-size: 13px; color: #565b63; gap: 7px; }
.crumbs a, .crumbs h1 { display: flex; align-items: center; gap: 4px; font-weight: 600; }
.crumbs h1 { font-size: 17px; font-weight: 700; color: #0c0d0f; }
.crumbs svg { stroke-width: 1.5; }
.crumbs h1 svg { stroke-width: 2; }
.crumbs .sep { color: #b3b7bd; width: 6px; text-align: center; }
.account { display: flex; align-items: center; }
.news { gap: 6px; height: 32px; padding: 0 10px; margin-right: 4px; border: 1px solid #f2c5ba; border-radius: 7px; background: #fdf1ed; color: #9c2f22; font-weight: 700; font-size: 11px; }
.news b { width: 16px; height: 16px; border-radius: 50%; background: #ee4b2b; color: #fff; font-size: 10px; }
.tool { color: #4c525b; width: 42px; height: 32px; }
.user { gap: 8px; margin-left: 8px; padding: 0 6px 0 14px; font-weight: 600; font-size: 12px; background: linear-gradient(#dfe2e6, #dfe2e6) left center / 1px 24px no-repeat; }
.user svg { color: #777; stroke-width: 1.5; }
.avatar { width: 32px; height: 32px; border-radius: 8px; background: #191b4a; color: #fff; display: grid; place-items: center; font-weight: 700; font-size: 11px; }

.tabs { display: flex; align-items: center; height: 44px; margin: 0 13px; gap: 2px; font-size: 11px; }
.tab { display: flex; align-items: center; gap: 4px; padding: 0 12px; height: 30px; border-radius: 15px; color: #3c4857; white-space: nowrap; }
.tab .i14 { stroke-width: 1.5; }
.group { display: flex; align-items: center; gap: 2px; height: 34px; padding: 0 2px 0 1px; border: 1px solid #dfe3ea; border-radius: 17px; background: #f3f5f8; margin: 0 2px; }
.group .sub { padding: 0 10px; }
.group .on { background: #fff; color: #123a5f; font-weight: 600; box-shadow: 0 0 2px #c8ced8; }
.group .cur { background: #fff; color: #0c0d0f; font-weight: 700; }
.config { margin-left: auto; width: 36px; }

.bar { display: flex; align-items: center; height: 49px; padding: 0 5px 0 6px; border-bottom: 1px solid #cfd2d5; }
.btn { height: 36px; padding: 0 12px; gap: 8px; border: 1px solid #d2d3d5; background: #fff; font-weight: 600; font-size: 12px; color: #23262b; white-space: nowrap; }
.btn.square { width: 36px; padding: 0; }
.btn.primary { background: #002b57; border-color: #002b57; color: #fff; padding: 0 16px; }
.dim { color: #777; }
.code { margin: 0 8px 0 12px; padding: 4px 9px; border-radius: 5px; background: #efefee; color: #23262b; font: 700 12px/16px "DejaVu Sans Mono", monospace; }
.bar h2 { font-size: 14px; font-weight: 600; }
.actions { margin-left: auto; display: flex; gap: 8px; }

.work { flex: 1; min-height: 0; display: flex; }
.canvas { flex: 1; min-width: 0; position: relative; overflow: hidden; background: #e8ecef; padding: 90px 23px 0 85px; }
.sheet { position: relative; background: #fff; height: 100%; }
.plan { width: 100%; height: auto; }
.panel { width: 38px; background: #fafaf9; display: flex; flex-direction: column; align-items: center; padding-top: 14px; gap: 14px; }
.panel .tool { color: #888; width: 36px; }
.dot { width: 8px; height: 8px; border-radius: 50%; background: #5b55e0; }

.frame { stroke: #c4c4c4; }
.grid path { stroke: #f5e2e3; stroke-dasharray: 6 3; }
.grid .faint { stroke: #f5f2f2; }
.grid .gray { stroke: #e2e2e2; }
.beams path { stroke: #ddd9d9; stroke-dasharray: 2 1; stroke-width: .5; }
.hair path { stroke: #b0b0bf; stroke-width: .5; }
.wall path { fill: #eee; stroke: #a39e9c; stroke-width: .8; }
.core path { stroke: #999; stroke-width: .8; }
.bubble circle { stroke: #bbb; stroke-width: .6; fill: #fff; }
.plan text { font-family: "Liberation Sans", sans-serif; fill: #222; }
.plan .tiny { font-size: 4px; }
.plan .cap { font-size: 6px; }
.plan .head5 { font-size: 5px; font-weight: 700; }
.plan .b { font-weight: 700; }
.plan .mid, .mark { text-anchor: middle; }
.mark { font-size: 8px; font-weight: 700; }
.mark path { fill: #111; }
.plan .brand text { font-family: Montserrat, "Open Sans", sans-serif; }

.marker { position: absolute; left: 50.5%; top: 321px; width: 41px; height: 42px; border: 5px solid #f15a29; border-radius: 8px; background: #c9c9cd; }
.marker span { width: 26px; height: 26px; border-radius: 50%; background: #5b55e6; color: #fff; display: grid; place-items: center; font-weight: 700; font-size: 13px; }
.marker b { position: absolute; left: 2px; bottom: 32px; width: 30px; height: 27px; border-radius: 5px; background: #f15a29; color: #fff; font-size: 15px; display: grid; place-items: center; }

.tools { position: absolute; left: 13px; top: 135px; width: 40px; padding: 5px 4px; border-radius: 6px; background: #fff; box-shadow: 0 8px 24px #00000018; display: flex; flex-direction: column; align-items: center; gap: 6px; color: #3f4247; }
.tools button { width: 32px; height: 28px; }
.tools svg { stroke-width: 1.5; }
.tools hr { width: 20px; margin-bottom: 1px; }
.tools .tight { margin: -1px 0 -2px; }
.tools .active { height: 32px; border-radius: 7px; background: #002b57; color: #fff; box-shadow: 0 0 0 1px #b9d4f0; }
.tools .active svg { stroke-width: 2; }
.tools button:disabled { color: #c2c4c7; }

.pager, .caption, .version { position: absolute; color: #fff; box-shadow: 0 8px 24px #00000040; display: flex; align-items: center; }
.pager { left: 16px; bottom: 16px; height: 36px; border-radius: 5px; background: #333; }
.pager button { width: 36px; height: 36px; }
.pager button + button, .caption button { border-left: 1px solid #5c5c5c; }
.caption { left: 50%; transform: translateX(-50%); bottom: 16px; height: 34px; background: #2c2c2c; font-weight: 600; white-space: nowrap; }
.caption span { padding: 0 12px; }
.caption button { width: 38px; height: 34px; }
.caption svg { stroke-width: 1.5; }
.version { right: 17px; bottom: 16px; height: 34px; padding: 0 12px; gap: 8px; background: #1f1f1f; font-weight: 600; }
.version small { font-size: 11px; color: #8f8f8f; }
.version svg { color: #8f8f8f; }

.issue { position: absolute; left: 19px; top: 19px; height: 38px; padding: 0 12px 0 3px; display: flex; align-items: center; gap: 7px; border-radius: 19px; border: 1px solid #5d1016; background: #ca2a30; color: #fff; box-shadow: 0 12px 24px #0000001c; font: 500 13px/16px Inter, sans-serif; }
.issue .n { width: 31px; height: 31px; border-radius: 50%; background: #d6545a; display: grid; place-items: center; margin-right: 3px; }
.toast { position: absolute; left: 50%; transform: translateX(-50%); top: 3px; height: 43px; padding: 0 19px 0 12px; display: flex; align-items: center; gap: 12px; border-radius: 8px; background: #fff; color: #4d4d4d; font-size: 15px; font-weight: 500; box-shadow: 0 2px 8px #0000002b; }
.toast i { width: 12px; height: 12px; border-radius: 50%; background: #73d67c; }
```
